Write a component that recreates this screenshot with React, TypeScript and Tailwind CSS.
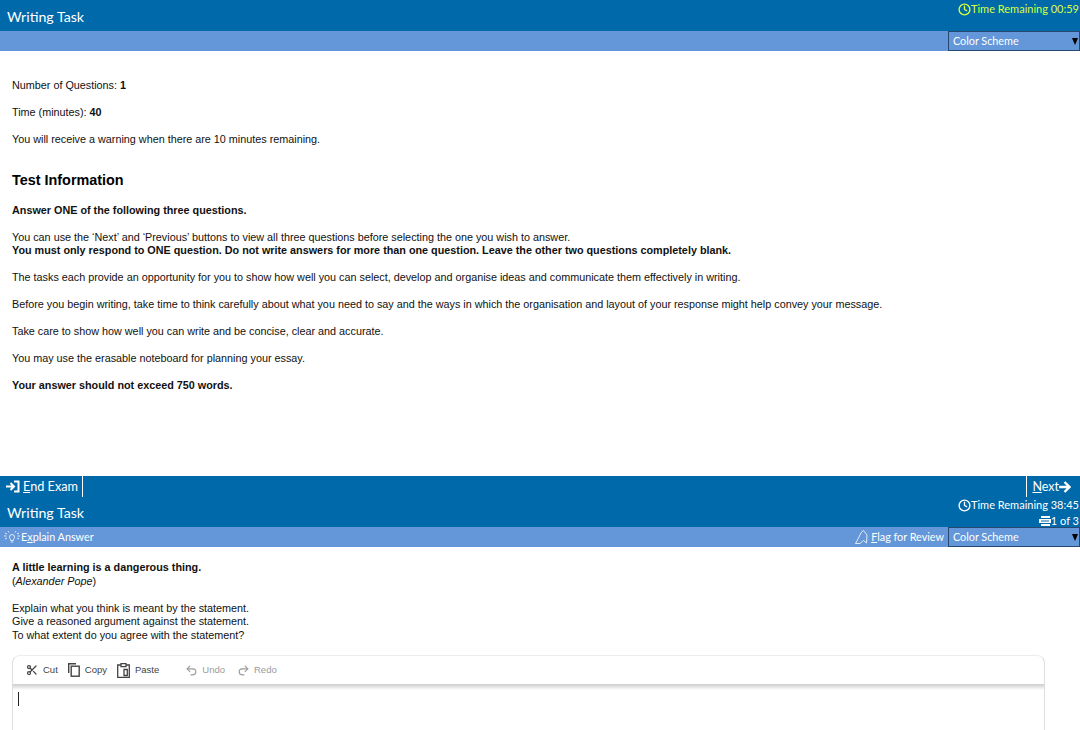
import { Scissors, Undo2, Redo2, Clock } from "lucide-react";

const ui = "font-['Lato',sans-serif]";

function ColorScheme() {
  return (
    <div className="flex h-[20px] w-[132px] items-center justify-between border border-[#27496f] bg-[#6397d9] pl-[4px] pr-[1px] text-[10.8px] text-white">
      <span>Color Scheme</span>
      <span className="h-0 w-0 border-x-[3.5px] border-t-[7px] border-x-transparent border-t-black" />
    </div>
  );
}

function EndIcon() {
  return (
    <svg width="14" height="13" viewBox="0 0 14 13" fill="none" stroke="white" strokeWidth="2">
      <path d="M0 6.5h7M4.500 3l3.500 3.500-3.500 3.500" />
      <path d="M8 1.500h4.500v10H8" />
    </svg>
  );
}

function NextArrow() {
  return (
    <svg width="12" height="12" viewBox="0 0 12 12" fill="none" stroke="white" strokeWidth="2.4">
      <path d="M0 6h10M5.500 1l5 5-5 5" />
    </svg>
  );
}

function BulbIcon() {
  return (
    <svg width="16" height="13" viewBox="0 0 16 13" fill="none" stroke="white" strokeWidth="0.8">
      <path d="M5.500 6a2.500 2.500 0 1 1 5 0c0 1.300-1 1.700-1.200 3.500H6.700C6.500 7.700 5.500 7.300 5.500 6zM6.800 11h2.400" />
      <path d="M1 2l2 1M0 5h2.500M1 8l2-1M15 2l-2 1M16 5h-2.500M15 8l-2-1M4 0l1 1.500M12 0l-1 1.500" />
    </svg>
  );
}

function FlagIcon() {
  return (
    <svg width="13" height="14" viewBox="0 0 13 14" fill="none" stroke="white" strokeWidth="0.8">
      <path d="M0.500 13.500 L4 7 Q6 1.500 8.500 0.500 L12 5 L11.500 13 L8.500 10.500 L5 13.500 Z" />
    </svg>
  );
}

function PagesIcon() {
  return (
    <svg width="13" height="11" viewBox="0 0 13 11" fill="white">
      <path d="M3 0h9v2H3zM1 3h12v4H1zM3 8h9v2H3z" />
      <path d="M3 4.500h8v1H3z" fill="#0069aa" />
    </svg>
  );
}

function CopyIcon() {
  return (
    <svg width="12" height="14" viewBox="0 0 12 14" fill="none" stroke="#444" strokeWidth="1.400">
      <path d="M0.700 10V0.700H8" />
      <rect x="3.200" y="3.200" width="8" height="10" />
    </svg>
  );
}

function PasteIcon() {
  return (
    <svg width="13" height="15" viewBox="0 0 13 15" fill="none" stroke="#444" strokeWidth="1.300">
      <path d="M4 2H0.700v12.300h11.600V2H9" />
      <path d="M4 0.700h5v3H4z" />
      <path d="M7 6.500h3.300v6H7z" />
    </svg>
  );
}

function ToolButton({ icon, label, muted, className }: { icon: React.ReactNode; label: string; muted?: boolean; className?: string }) {
  return (
    <div className={`flex items-center text-[9.5px] ${muted ? "gap-[4px] text-[#9b9b9b]" : "gap-[5px] text-[#444]"} ${className ?? ""}`}>
      {icon}
      <span>{label}</span>
    </div>
  );
}

export default function App() {
  return (
    <div className="flex h-[730px] w-[1080px] flex-col overflow-hidden bg-white font-['Liberation_Sans',sans-serif] text-[10.8px] leading-[13.5px] text-[#111]">
      <header className={`flex h-[31px] shrink-0 items-start justify-between bg-[#0069aa] pl-[7px] pr-[1px] ${ui}`}>
        <span className="mt-[7px] text-[14.2px] leading-[20px] text-white">Writing Task</span>
        <span className="mt-[2px] flex items-center text-[11px] leading-[14px] text-[#d6ff3f]">
          <Clock size={13} strokeWidth={2.5} />
          Time Remaining 00:59
        </span>
      </header>
      <div className={`flex h-[20px] shrink-0 justify-end bg-[#6397d9] ${ui}`}>
        <ColorScheme />
      </div>

      <main className="h-[425px] shrink-0 pl-[12px] pt-[28px]">
        <p>Number of Questions: <b>1</b></p>
        <p className="mt-[13.5px]">Time (minutes): <b>40</b></p>
        <p className="mt-[13.5px]">You will receive a warning when there are 10 minutes remaining.</p>
        <h2 className="mt-[24px] text-[14.4px] font-bold leading-[18px] text-black">Test Information</h2>
        <p className="mt-[15px] font-bold">Answer ONE of the following three questions.</p>
        <p className="mt-[13.5px]">You can use the ‘Next’ and ‘Previous’ buttons to view all three questions before selecting the one you wish to answer.</p>
        <p className="font-bold">You must only respond to ONE question. Do not write answers for more than one question. Leave the other two questions completely blank.</p>
        <p className="mt-[13.5px]">The tasks each provide an opportunity for you to show how well you can select, develop and organise ideas and communicate them effectively in writing.</p>
        <p className="mt-[13.5px]">Before you begin writing, take time to think carefully about what you need to say and the ways in which the organisation and layout of your response might help convey your message.</p>
        <p className="mt-[13.5px]">Take care to show how well you can write and be concise, clear and accurate.</p>
        <p className="mt-[13.5px]">You may use the erasable noteboard for planning your essay.</p>
        <p className="mt-[13.5px] font-bold">Your answer should not exceed 750 words.</p>
      </main>

      <div className={`flex h-[21px] shrink-0 justify-between bg-[#0069aa] text-[12.7px] leading-[21px] text-white ${ui}`}>
        <div className="flex items-center gap-[3px] border-r border-white pl-[6px] pr-[4px]">
          <EndIcon />
          <span><span className="underline">E</span>nd Exam</span>
        </div>
        <div className="flex items-center border-l border-white pl-[5px] pr-[9px] text-[12.5px]">
          <span><span className="underline">N</span>ext</span>
          <NextArrow />
        </div>
      </div>
      <div className={`flex h-[30px] shrink-0 items-start justify-between bg-[#0069aa] pl-[7px] pr-[1px] text-white ${ui}`}>
        <span className="mt-[6px] text-[14.2px] leading-[20px]">Writing Task</span>
        <div className="flex flex-col items-end text-[11px] leading-[16px]">
          <span className="flex items-center"><Clock size={13} strokeWidth={2.5} />Time Remaining 38:45</span>
          <span className="flex items-center"><PagesIcon />1 of 3</span>
        </div>
      </div>
      <div className={`flex h-[20px] shrink-0 items-center justify-between bg-[#6397d9] text-[10.8px] text-white ${ui}`}>
        <div className="flex items-center gap-[1px] pl-[4px]">
          <BulbIcon />
          <span>E<span className="underline">x</span>plain Answer</span>
        </div>
        <div className="flex items-center">
          <div className="mr-[4px] flex items-center gap-[3px]">
            <FlagIcon />
            <span><span className="underline">F</span>lag for Review</span>
          </div>
          <ColorScheme />
        </div>
      </div>

      <section className="shrink-0 pl-[12px] pr-[35px] pt-[14px]">
        <p className="font-bold">A little learning is a dangerous thing.</p>
        <p>(<i>Alexander Pope</i>)</p>
        <p className="mt-[13.5px]">Explain what you think is meant by the statement.</p>
        <p>Give a reasoned argument against the statement.</p>
        <p>To what extent do you agree with the statement?</p>
        <div className="mt-[13px] h-[90px] rounded-t-[8px] border border-[#dedede] border-t-[#ececec]">
          <div className="flex h-[28px] items-center pl-[13px]">
            <ToolButton icon={<Scissors size={12} strokeWidth={2.5} />} label="Cut" />
            <ToolButton className="ml-[10px]" icon={<CopyIcon />} label="Copy" />
            <ToolButton className="ml-[10px]" icon={<PasteIcon />} label="Paste" />
            <ToolButton muted className="ml-[26px]" icon={<Undo2 size={13} />} label="Undo" />
            <ToolButton muted className="ml-[12px]" icon={<Redo2 size={13} />} label="Redo" />
          </div>
          <div className="h-[6px] bg-gradient-to-b from-[#cccccc] to-white" />
          <div className="ml-[5px] mt-[2px] h-[14px] w-px bg-[#222]" />
        </div>
      </section>
    </div>
  );
}
